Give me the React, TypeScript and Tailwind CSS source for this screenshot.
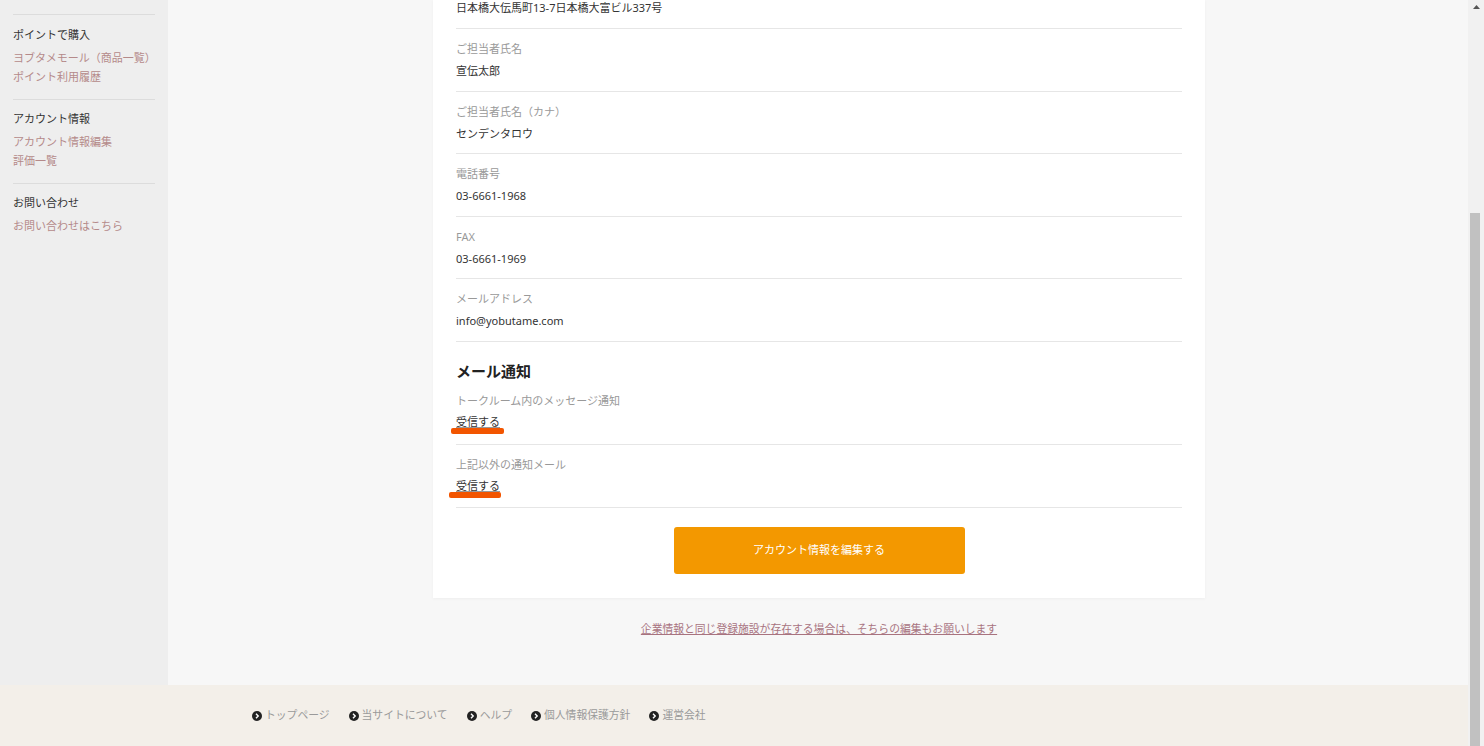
import React from "react";

const font = { fontFamily: '"Noto Sans", "Noto Sans CJK JP", sans-serif' };

function Row({ label, value, first }: { label?: string; value: string; first?: boolean }) {
  if (first) {
    return (
      <div className="border-b border-[#e6e6e6] pb-[12px]">
        <div className="text-[11px] leading-[16px] text-[#333]">{value}</div>
      </div>
    );
  }
  return (
    <div className="border-b border-[#e6e6e6] pt-[13px] pb-[11.5px]">
      <div className="text-[11px] leading-[14px] text-[#999]">{label}</div>
      <div className="mt-[7px] text-[11px] leading-[16px] text-[#333]">{value}</div>
    </div>
  );
}

function Marked({ text, left, width, top }: { text: string; left: string; width: string; top: string }) {
  return (
    <span className="relative inline-block">
      <span className="underline decoration-[#999]">{text}</span>
      <span className={`absolute ${left} ${width} ${top} h-[6px] rounded-[2px] bg-[#f25500]`} />
    </span>
  );
}

function FooterLink({ text }: { text: string }) {
  return (
    <span className="flex items-center gap-[3px] text-[10.8px] text-[#9a9a9a]">
      <svg width="10" height="10" viewBox="0 0 10 10">
        <circle cx="5" cy="5" r="5" fill="#222" />
        <path d="M4 2.8 L6.2 5 L4 7.2" stroke="#fff" strokeWidth="1.4" fill="none" />
      </svg>
      {text}
    </span>
  );
}

export default function App() {
  return (
    <div className="flex h-[746px] w-[1484px] overflow-hidden bg-[#f7f7f7]" style={font}>
      <div className="flex flex-1 flex-col">
        <div className="flex flex-1 overflow-hidden">
          {/* sidebar */}
          <aside className="w-[168px] shrink-0 bg-[#eeeeee] px-[13px]">
            <div className="mt-[14px] h-px w-[142px] bg-[#dcdcdc]" />
            <div className="pt-[10px] text-[11px] leading-[19px]">
              <div className="text-[#333]">ポイントで購入</div>
              <div className="mt-[4px] text-[#b58a8a]">ヨブタメモール（商品一覧）</div>
              <div className="text-[#b58a8a]">ポイント利用履歴</div>
            </div>
            <div className="mt-[13px] h-px w-[142px] bg-[#dcdcdc]" />
            <div className="pt-[9px] text-[11px] leading-[19px]">
              <div className="text-[#333]">アカウント情報</div>
              <div className="mt-[4px] text-[#b58a8a]">アカウント情報編集</div>
              <div className="text-[#b58a8a]">評価一覧</div>
            </div>
            <div className="mt-[13px] h-px w-[142px] bg-[#dcdcdc]" />
            <div className="pt-[9px] text-[11px] leading-[19px]">
              <div className="text-[#333]">お問い合わせ</div>
              <div className="mt-[4px] text-[#b58a8a]">お問い合わせはこちら</div>
            </div>
          </aside>
          {/* main */}
          <main className="flex flex-1 flex-col items-center pl-[2px]">
            <div className="w-[772px] bg-white px-[23px] pb-[24px] shadow-[0_1px_3px_rgba(0,0,0,0.04)]">
              <Row first value="日本橋大伝馬町13-7日本橋大富ビル337号" />
              <Row label="ご担当者氏名" value="宣伝太郎" />
              <Row label="ご担当者氏名（カナ）" value="センデンタロウ" />
              <Row label="電話番号" value="03-6661-1968" />
              <Row label="FAX" value="03-6661-1969" />
              <Row label="メールアドレス" value="info@yobutame.com" />
              <h2 className="pt-[19px] text-[15px] font-bold leading-[20px] text-[#222]">メール通知</h2>
              <div className="border-b border-[#e6e6e6] pb-[14px]">
                <div className="mt-[13px] text-[11px] leading-[14px] text-[#999]">トークルーム内のメッセージ通知</div>
                <div className="mt-[6px] text-[11px] leading-[16px] text-[#333]">
                  <Marked text="受信する" left="-left-[5px]" width="w-[53px]" top="top-[14px]" />
                </div>
              </div>
              <div className="border-b border-[#e6e6e6] pb-[13px]">
                <div className="mt-[13px] text-[11px] leading-[14px] text-[#999]">上記以外の通知メール</div>
                <div className="mt-[6px] text-[11px] leading-[16px] text-[#333]">
                  <Marked text="受信する" left="-left-[7px]" width="w-[52px]" top="top-[14px]" />
                </div>
              </div>
              <div className="flex justify-center pt-[19px]">
                <button className="h-[47px] w-[291px] rounded-[3px] bg-[#f39800] text-[11px] text-white">
                  アカウント情報を編集する
                </button>
              </div>
            </div>
            <a className="mt-[23px] text-[10.8px] leading-[16px] text-[#a8737f] underline">
              企業情報と同じ登録施設が存在する場合は、そちらの編集もお願いします
            </a>
          </main>
        </div>
        {/* footer */}
        <footer className="flex h-[61px] shrink-0 items-center gap-[19px] bg-[#f3efe9] pl-[252px]">
          <FooterLink text="トップページ" />
          <FooterLink text="当サイトについて" />
          <FooterLink text="ヘルプ" />
          <FooterLink text="個人情報保護方針" />
          <FooterLink text="運営会社" />
        </footer>
      </div>
      {/* scrollbar */}
      <div className="flex w-[16px] shrink-0 flex-col bg-[#f1f1f1]">
        <div className="flex h-[14px] items-center justify-center">
          <svg width="7" height="4" viewBox="0 0 7 4">
            <path d="M0 4 L3.5 0 L7 4 Z" fill="#555" />
          </svg>
        </div>
        <div className="mt-[199px] ml-[2px] w-[10px] flex-1 bg-[#c1c1c1]" />
      </div>
    </div>
  );
}
